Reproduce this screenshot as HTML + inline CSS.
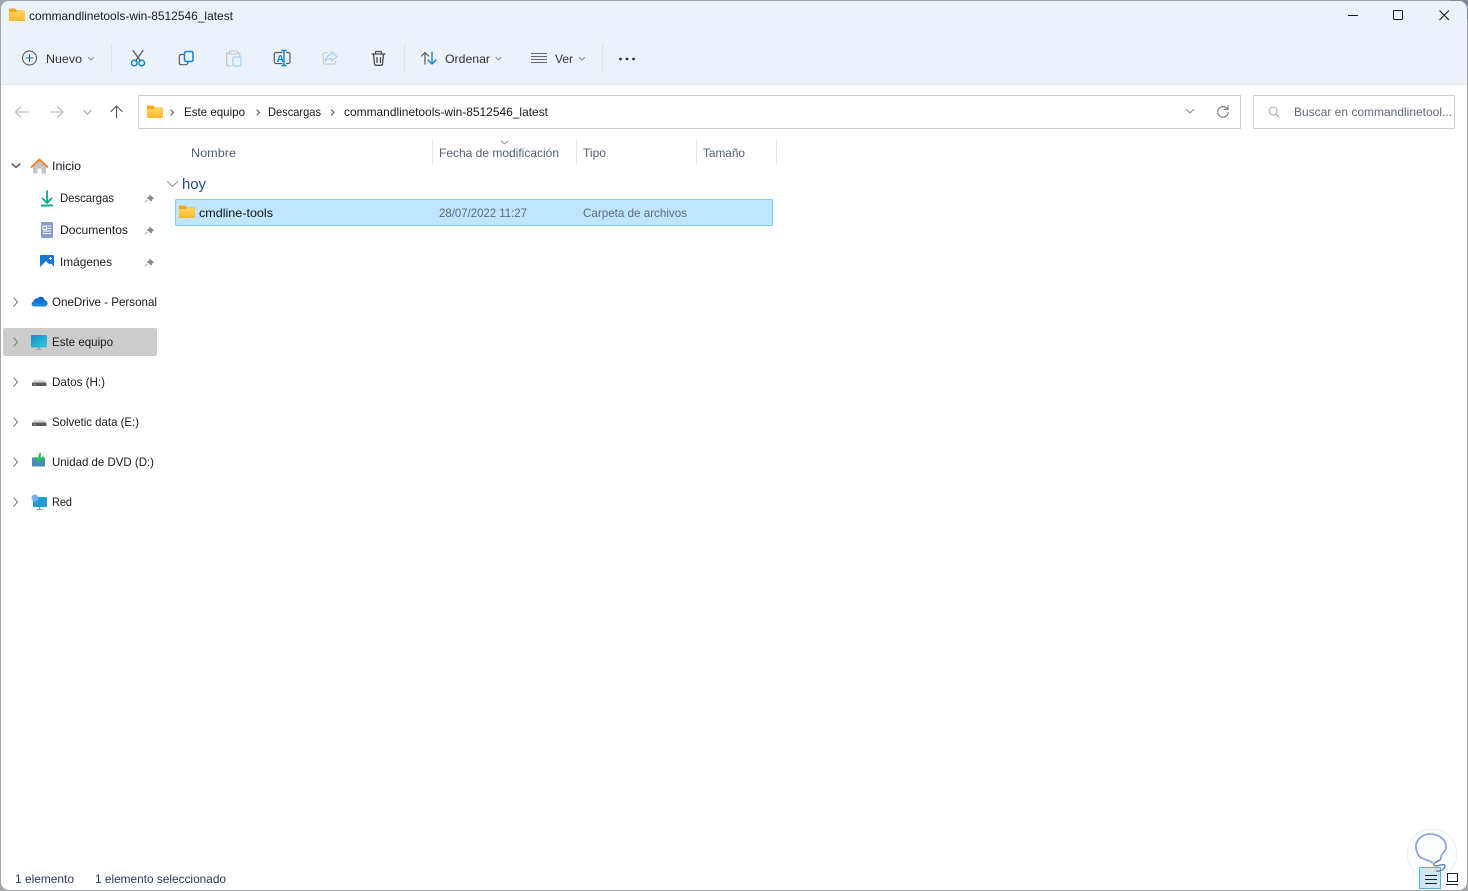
<!DOCTYPE html>
<html lang="es"><head><meta charset="utf-8"><title>commandlinetools-win-8512546_latest</title>
<style>
html,body{margin:0;padding:0;background:#fff;width:1468px;height:891px;overflow:hidden}
svg{display:block}
text{font-family:"Liberation Sans",sans-serif;font-size:12px;fill:#1a1a1a}
.n{fill:none;stroke-linecap:round;stroke-linejoin:round}
.h{fill:#4f6078}
.g{fill:#5f6a78}
</style></head><body>
<svg width="1468" height="891" viewBox="0 0 1468 891" xmlns="http://www.w3.org/2000/svg">
<defs>
<linearGradient id="fo" x1="0" y1="0" x2="0" y2="1"><stop offset="0" stop-color="#ffd25e"/><stop offset="1" stop-color="#fdb92c"/></linearGradient>
<linearGradient id="mon" x1="0" y1="0" x2="1" y2="1"><stop offset="0" stop-color="#0f8fc8"/><stop offset="1" stop-color="#35c8dc"/></linearGradient>
<linearGradient id="od" x1="0" y1="0" x2="0" y2="1"><stop offset="0" stop-color="#0a5fc0"/><stop offset="1" stop-color="#1e8ee0"/></linearGradient>
<g id="folder"><path d="M0 2.500a1 1 0 0 1 1-1h5l2 2h7a1 1 0 0 1 1 1V13a1 1 0 0 1-1 1H1a1 1 0 0 1-1-1z" fill="#f5a81c"/><path d="M0 6a1 1 0 0 1 1-1h6l1.500-1H15a1 1 0 0 1 1 1v8a1 1 0 0 1-1 1H1a1 1 0 0 1-1-1z" fill="url(#fo)"/></g>
<g id="pin"><path d="M.5 -4.500l4.500 3.800-1.300 .7-1.200 2.800-5-4.200 2.700-1.100z" fill="#8a8a8a"/><path d="M-2 .5l-3 3.700 3.800-2.800z" fill="#8a8a8a"/></g>
<g id="drive"><path d="M2 4h11l1.500 2.500H.5z" fill="#dcdcdc"/><rect x="0" y="6.500" width="14.500" height="3.500" rx=".8" fill="#585858"/><rect x="2" y="7.700" width="2" height="1" fill="#7fd06e"/></g>
</defs>

<!-- window chrome -->
<rect width="1468" height="891" fill="#a3a6a8"/>
<path d="M1450 0h18v20z" fill="#7f8b98"/>
<path d="M1 9a8 8 0 0 1 8-8h1450a8 8 0 0 1 8 8v873a8 8 0 0 1-8 8H9a8 8 0 0 1-8-8z" fill="#fff"/>
<path d="M1 84V9a8 8 0 0 1 8-8h1450a8 8 0 0 1 8 8v75z" fill="#ecf2f9"/>
<rect x="1" y="84" width="1466" height="1" fill="#dfe3e8"/>

<!-- title -->
<use href="#folder" x="9" y="7"/>
<text x="29" y="20" textLength="204" lengthAdjust="spacingAndGlyphs">commandlinetools-win-8512546_latest</text>
<path d="M1348 15.500h10" stroke="#1a1a1a" stroke-width="1" fill="none"/>
<rect x="1393.500" y="10.500" width="9" height="9" rx="1" fill="none" stroke="#1a1a1a"/>
<path d="M1439.500 10.500l9.500 9.500M1449 10.500l-9.500 9.500" stroke="#1a1a1a" fill="none"/>

<!-- command bar -->
<circle cx="29.500" cy="58" r="7" class="n" stroke="#4a4a4a"/>
<path d="M29.500 54.500v7M26 58h7" class="n" stroke="#0a6cc4"/>
<text x="46" y="63" textLength="36" lengthAdjust="spacingAndGlyphs" style="fill:#333">Nuevo</text>
<path d="M88.500 57.500l2.500 2.500 2.500-2.500" class="n" stroke="#8a8a8a"/>
<rect x="111" y="43" width="1" height="30" fill="#dde2e8"/>

<!-- cut -->
<path d="M133 50.500l7.500 10.500M143 50.500l-7.500 10.500" class="n" stroke="#5b5b5b" stroke-width="1.300"/>
<circle cx="134.300" cy="63" r="2.800" class="n" stroke="#0a84d6" stroke-width="1.400"/>
<circle cx="141.700" cy="63" r="2.800" class="n" stroke="#0a84d6" stroke-width="1.400"/>
<!-- copy -->
<path d="M184 54.500h-3a1.700 1.700 0 0 0-1.700 1.700V63a1.700 1.700 0 0 0 1.700 1.700h5a1.700 1.700 0 0 0 1.700-1.700v-.5" class="n" stroke="#5b5b5b" stroke-width="1.200"/>
<rect x="184.500" y="51.500" width="8.500" height="10" rx="1.700" class="n" stroke="#0a84d6" stroke-width="1.500"/>
<!-- paste -->
<path d="M228.500 53h-1a.8.8 0 0 0-.8.8V65a.8.8 0 0 0 .8.8h3M238 53h1a.8.8 0 0 1 .8.8V56" class="n" stroke="#c2c6ca" stroke-width="1.200"/>
<rect x="229.500" y="51" width="8" height="3" rx="1" class="n" stroke="#c2c6ca"/>
<rect x="233" y="57" width="8" height="9" rx="1.300" class="n" stroke="#a8d2f0" stroke-width="1.200"/>
<!-- rename -->
<path d="M282 52.500h-6a1.700 1.700 0 0 0-1.700 1.700v7.600a1.700 1.700 0 0 0 1.700 1.700h6M286.500 52.500h1.800a1.700 1.700 0 0 1 1.700 1.700v7.600a1.700 1.700 0 0 1-1.700 1.700h-1.800" class="n" stroke="#5b5b5b" stroke-width="1.200"/>
<path d="M284 51v14M282 50.500h4M282 65.500h4" class="n" stroke="#0a84d6" stroke-width="1.400"/>
<text x="276.500" y="62" style="font-size:10.500px;font-weight:bold;fill:#0a84d6">A</text>
<!-- share -->
<path d="M327 52.800h-2.300a1.500 1.500 0 0 0-1.500 1.500V62.500a1.500 1.500 0 0 0 1.500 1.500H334a1.500 1.500 0 0 0 1.500-1.500V61" class="n" stroke="#c8ccd0" stroke-width="1.200"/>
<path d="M331.500 51.500l5.500 5-5.500 4.500v-2.500c-3 0-5 1-6.500 3 .5-4 3-6.500 6.500-7.500z" class="n" stroke="#a8d2f0" stroke-width="1.200"/>
<!-- delete -->
<path d="M372 54h13M375.500 54v-1.500a1 1 0 0 1 1-1h4a1 1 0 0 1 1 1V54M373.500 54l1 10a1.500 1.500 0 0 0 1.500 1.300h5a1.500 1.500 0 0 0 1.500-1.300l1-10M377 57.500v5M380.500 57.500v5" class="n" stroke="#4d4d4d" stroke-width="1.300"/>
<rect x="404" y="43" width="1" height="30" fill="#dde2e8"/>
<!-- sort -->
<path d="M425 64V52.500M421.500 56l3.500-3.500 3.500 3.500" class="n" stroke="#5b5b5b" stroke-width="1.200"/>
<path d="M432 52v12M428 60l4 4 4-4" class="n" stroke="#0a84d6" stroke-width="1.300"/>
<text x="445" y="63" textLength="45" lengthAdjust="spacingAndGlyphs" style="fill:#333">Ordenar</text>
<path d="M496 57.500l2.500 2.500 2.500-2.500" class="n" stroke="#8a8a8a"/>
<!-- ver -->
<path d="M531 53.500h16M531 56.500h16M531 59.500h16M531 62.500h16" stroke="#666" fill="none"/>
<text x="555" y="63" textLength="18" lengthAdjust="spacingAndGlyphs" style="fill:#333">Ver</text>
<path d="M579.500 57.500l2.500 2.500 2.500-2.500" class="n" stroke="#8a8a8a"/>
<rect x="602" y="43" width="1" height="30" fill="#dde2e8"/>
<circle cx="620.500" cy="59" r="1.400" fill="#333"/><circle cx="627" cy="59" r="1.400" fill="#333"/><circle cx="633.500" cy="59" r="1.400" fill="#333"/>

<!-- nav -->
<path d="M16 112h12.500M21 106.500l-5.500 5.500 5.500 5.500" class="n" stroke="#b4b4b4" stroke-width="1.100"/>
<path d="M50.500 112h12.500M57.500 106.500l5.500 5.500-5.500 5.500" class="n" stroke="#b4b4b4" stroke-width="1.100"/>
<path d="M84 110.500l3.500 3.500 3.500-3.500" class="n" stroke="#9a9a9a"/>
<path d="M116.500 118V106M111 111.500l5.500-5.500 5.500 5.500" class="n" stroke="#555" stroke-width="1.100"/>

<!-- address bar -->
<rect x="138.500" y="95.500" width="1102" height="33" fill="#fff" stroke="#cfcfcf"/>
<use href="#folder" x="147" y="104"/>
<path d="M171 110l2.500 2.500-2.500 2.500M257 110l2.500 2.500-2.500 2.500M331.500 110l2.500 2.500-2.500 2.500" class="n" stroke="#555" stroke-width="1.100"/>
<text x="184" y="116" textLength="61" lengthAdjust="spacingAndGlyphs">Este equipo</text>
<text x="268" y="116" textLength="53" lengthAdjust="spacingAndGlyphs">Descargas</text>
<text x="344" y="116" textLength="204" lengthAdjust="spacingAndGlyphs">commandlinetools-win-8512546_latest</text>
<path d="M1186.500 109.500l3.500 3.500 3.500-3.500" class="n" stroke="#888"/>
<path d="M1227.500 109a5.300 5.300 0 1 0 .8 3.500M1228 105.500v3.800h-3.800" class="n" stroke="#777" stroke-width="1.100"/>

<!-- search -->
<rect x="1253.500" y="95.500" width="201" height="33" fill="#fff" stroke="#cfcfcf"/>
<circle cx="1273" cy="111" r="4" class="n" stroke="#a8a8a8"/>
<path d="M1276 114l3 3" class="n" stroke="#b58ab5"/>
<text x="1294" y="116" textLength="158" lengthAdjust="spacingAndGlyphs" class="g">Buscar en commandlinetool...</text>

<!-- sidebar -->
<rect x="3" y="328" width="154" height="28" rx="2" fill="#cccccc"/>
<path d="M12 164l4 3.500 4-3.500" class="n" stroke="#444" stroke-width="1.300"/>
<path d="M33 165.500v8h4.500v-5h4v5H46v-8l-6.500-5.500z" fill="#c4c4c4"/>
<path d="M31.500 167l8-7.500 8 7.500" class="n" stroke="#ef7d1a" stroke-width="1.800"/>
<text x="52" y="170" textLength="29" lengthAdjust="spacingAndGlyphs">Inicio</text>

<path d="M47 191v12M42.500 198.500l4.500 4.500 4.500-4.500" class="n" stroke="#12a884" stroke-width="1.800"/>
<rect x="41" y="204.500" width="12" height="2" fill="#12a884"/>
<text x="60" y="202" textLength="54" lengthAdjust="spacingAndGlyphs">Descargas</text>
<use href="#pin" x="149" y="199"/>

<rect x="41" y="222" width="12" height="16" rx="1" fill="#8a9ccc"/>
<path d="M43 226h3.500v3.500H43zM47.500 226h3.500M47.500 228.500h3.500M43 231h8M43 233.500h8" stroke="#fff" fill="none"/>
<text x="60" y="234" textLength="68" lengthAdjust="spacingAndGlyphs">Documentos</text>
<use href="#pin" x="149" y="231"/>

<rect x="40" y="255" width="14" height="14" rx="1" fill="#1678d2"/>
<path d="M40 267l6-6 3.500 3.500 1.500-1 3 3v2.500H40z" fill="#fff"/>
<path d="M50.500 257v3M49 258.500h3" stroke="#fff" fill="none"/>
<text x="60" y="266" textLength="52" lengthAdjust="spacingAndGlyphs">Imágenes</text>
<use href="#pin" x="149" y="263"/>

<path d="M14 298l3.500 4-3.500 4" class="n" stroke="#8a8a8a" stroke-width="1.300"/>
<path d="M34 306.500a2.500 2.500 0 0 1-.6-4.900c.4-2.200 2.300-3.500 4.200-3.100 1-1.800 3.700-2.300 5.500-1 1 .8 1.400 1.800 1.500 2.800 1.700-.1 3 1.400 3 3.200 0 1.700-1.200 3-2.800 3z" fill="url(#od)"/>
<text x="52" y="306" textLength="105" lengthAdjust="spacingAndGlyphs">OneDrive - Personal</text>

<path d="M14 338l3.500 4-3.500 4" class="n" stroke="#8a8a8a" stroke-width="1.300"/>
<rect x="31" y="335" width="16" height="12.500" rx="1" fill="url(#mon)"/>
<path d="M38 347.500h2v1.500h-2zM35.500 349h7v.8h-7z" fill="#9aa0a6"/>
<text x="52" y="346" textLength="61" lengthAdjust="spacingAndGlyphs">Este equipo</text>

<path d="M14 378l3.500 4-3.500 4" class="n" stroke="#8a8a8a" stroke-width="1.300"/>
<use href="#drive" x="32" y="376"/>
<text x="52" y="386" textLength="53" lengthAdjust="spacingAndGlyphs">Datos (H:)</text>

<path d="M14 418l3.500 4-3.500 4" class="n" stroke="#8a8a8a" stroke-width="1.300"/>
<use href="#drive" x="32" y="416"/>
<text x="52" y="426" textLength="87" lengthAdjust="spacingAndGlyphs">Solvetic data (E:)</text>

<path d="M14 458l3.500 4-3.500 4" class="n" stroke="#8a8a8a" stroke-width="1.300"/>
<rect x="32" y="457.500" width="13" height="9" fill="#4a8cb8"/>
<path d="M40 454l-1 6M36 458l3 3 4-3.500" class="n" stroke="#25c05a" stroke-width="2.200"/>
<text x="52" y="466" textLength="102" lengthAdjust="spacingAndGlyphs">Unidad de DVD (D:)</text>

<path d="M14 498l3.500 4-3.500 4" class="n" stroke="#8a8a8a" stroke-width="1.300"/>
<rect x="33" y="497" width="14" height="10" rx="1" fill="#1c9fd6"/>
<circle cx="35" cy="498" r="3.500" fill="#6fb4ec"/>
<path d="M39.500 507v2M36.500 509.500h6" stroke="#8a929a" fill="none"/>
<text x="52" y="506" textLength="20" lengthAdjust="spacingAndGlyphs">Red</text>

<!-- column headers -->
<text x="191" y="157" textLength="45" lengthAdjust="spacingAndGlyphs" class="h">Nombre</text>
<rect x="432" y="140" width="1" height="25" fill="#e3e6ea"/>
<path d="M501 141l3.500 3 3.500-3" class="n" stroke="#8a8a8a" stroke-width=".9"/>
<text x="439" y="157" textLength="120" lengthAdjust="spacingAndGlyphs" class="h">Fecha de modificación</text>
<rect x="576" y="140" width="1" height="25" fill="#e3e6ea"/>
<text x="583" y="157" textLength="23" lengthAdjust="spacingAndGlyphs" class="h">Tipo</text>
<rect x="696" y="140" width="1" height="25" fill="#e3e6ea"/>
<text x="703" y="157" textLength="42" lengthAdjust="spacingAndGlyphs" class="h">Tamaño</text>
<rect x="776" y="140" width="1" height="25" fill="#e3e6ea"/>

<!-- group -->
<path d="M167.500 181.500l5 5 5-5" class="n" stroke="#8a94a4"/>
<text x="182" y="189" textLength="24" lengthAdjust="spacingAndGlyphs" style="font-size:15px;fill:#1f4a8c">hoy</text>

<!-- row -->
<rect x="175.500" y="199.500" width="597" height="26" rx="1" fill="#bfe6fd" stroke="#7fc9f9"/>
<use href="#folder" x="179" y="204"/>
<text x="199" y="217" textLength="74" lengthAdjust="spacingAndGlyphs" style="fill:#111">cmdline-tools</text>
<text x="439" y="217" textLength="88" lengthAdjust="spacingAndGlyphs" class="g">28/07/2022 11:27</text>
<text x="583" y="217" textLength="104" lengthAdjust="spacingAndGlyphs" class="g">Carpeta de archivos</text>

<!-- status -->
<text x="15" y="883" textLength="59" lengthAdjust="spacingAndGlyphs" style="fill:#1f3a5f">1 elemento</text>
<text x="95" y="883" textLength="131" lengthAdjust="spacingAndGlyphs" style="fill:#1f3a5f">1 elemento seleccionado</text>

<!-- watermark -->
<circle cx="1432" cy="854" r="25" fill="#fdfeff" stroke="#eef2f8" stroke-width="1.200"/>
<!-- view toggle -->
<rect x="1419.500" y="867.500" width="21" height="21" fill="#cfe8f6" stroke="#4db4de"/>
<path d="M1433 863C1428 859 1419 860 1417 852C1413 842 1421 834 1430 834C1439 834 1447 840 1446 848C1445 853 1440 854 1441 859" fill="none" stroke="#8ea7d8" stroke-width="1.800"/>
<path d="M1441 859C1438 862 1433 862 1434 865C1436 868 1445 862 1445 866C1445 869 1440 872 1436 871" fill="none" stroke="#5d86cc" stroke-width="1.500"/>
<path d="M1425 875.500h12M1425 879.500h12M1425 883.500h12" stroke="#222" fill="none"/>
<rect x="1447.500" y="873.500" width="10" height="8" fill="none" stroke="#222"/>
<path d="M1446 884.500h12" stroke="#222" fill="none"/>
</svg>
</body></html>
